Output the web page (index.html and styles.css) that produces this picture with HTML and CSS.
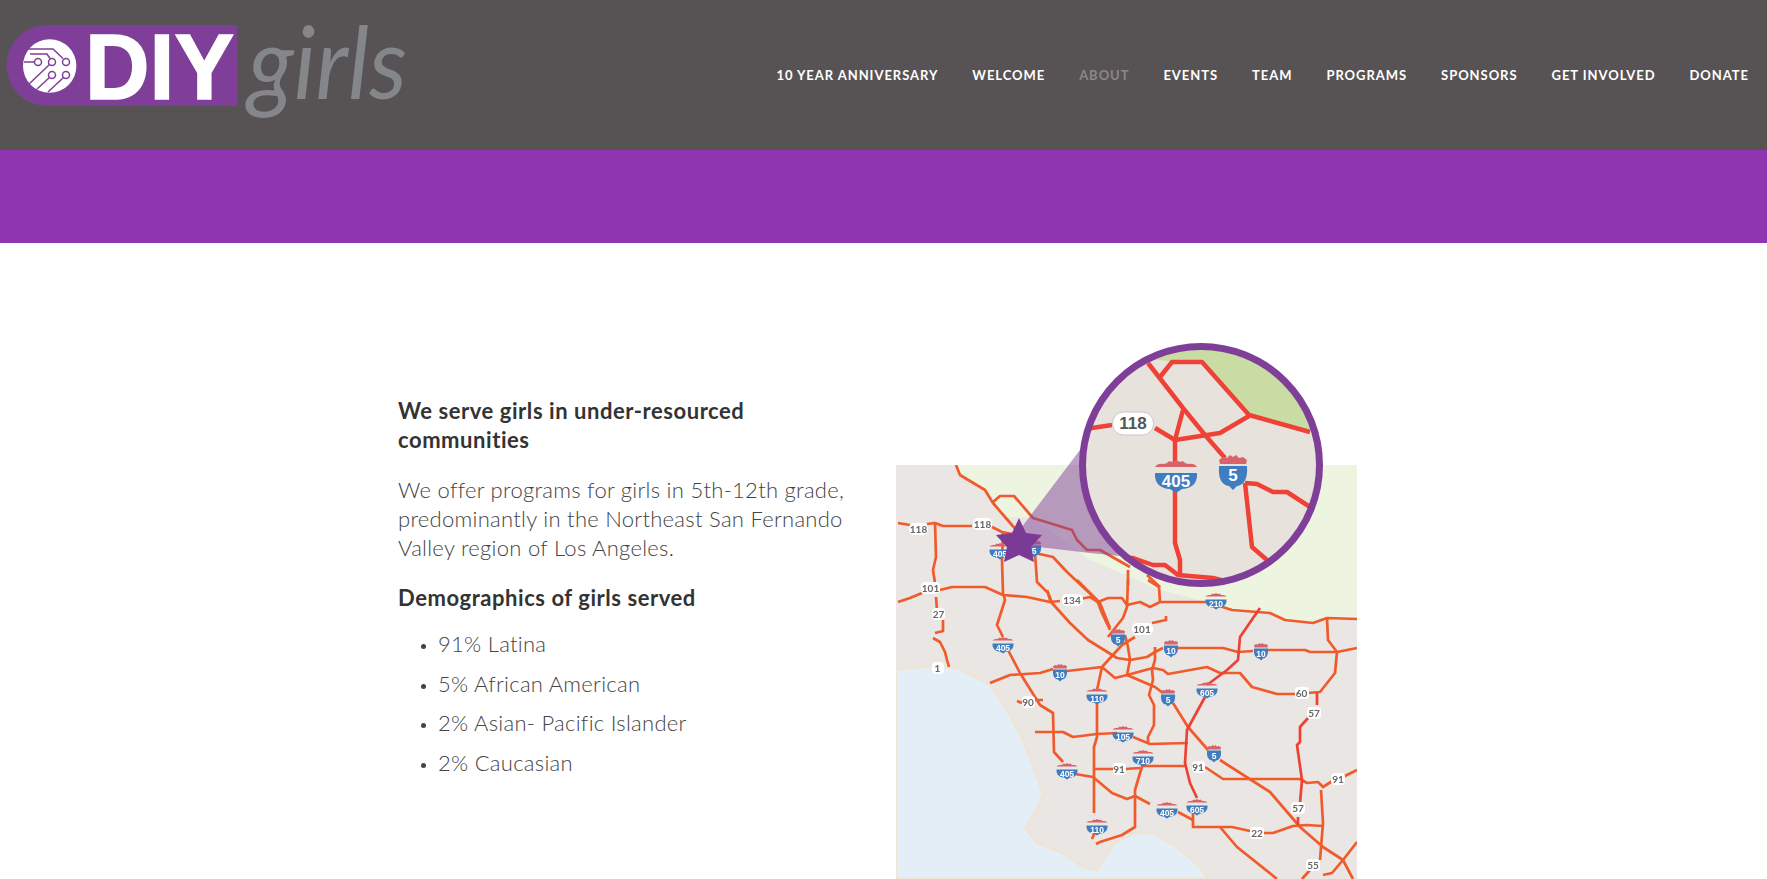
FILE: index.html
```html
<!DOCTYPE html>
<html lang="en">
<head>
    <meta charset="UTF-8">
    <meta name="viewport" content="width=device-width, initial-scale=1.0">
    <title>DIY Girls - About</title>
    <link rel="stylesheet" href="styles.css">
</head>
<body>
    <header class="site-header">
        <a class="logo" href="#" aria-label="DIY Girls">
            <svg class="logo-svg" viewBox="0 0 420 150" width="420" height="150">
                <path class="logo-pill" d="M237 25H47a40.500 40.500 0 0 0 0 81H237Z"/>
                <circle class="logo-chip" cx="49.700" cy="66" r="26.700"/>
                <g class="logo-trace">
                    <path d="M28 49H53L63 58.500"/>
                    <path d="M30 54H47L50 58.500"/>
                    <path d="M24 62H34.500"/>
                    <path d="M49.500 64.500L28 85"/>
                    <path d="M49.500 77.500L37 89"/>
                    <path d="M63.500 77.500L48 92"/>
                    <circle cx="38" cy="62" r="3.500"/>
                    <circle cx="52" cy="62" r="3.500"/>
                    <circle cx="66" cy="62" r="3.500"/>
                    <circle cx="52" cy="75" r="3.500"/>
                    <circle cx="66" cy="75" r="3.500"/>
                </g>
                <text class="logo-diy" x="85" y="99" textLength="149" lengthAdjust="spacingAndGlyphs">DIY</text>
                <text class="logo-girls" x="248" y="99" textLength="159" lengthAdjust="spacingAndGlyphs">girls</text>
            </svg>
        </a>
        <nav class="main-nav">
            <a href="#">10 Year Anniversary</a>
            <a href="#">Welcome</a>
            <a href="#" class="active">About</a>
            <a href="#">Events</a>
            <a href="#">Team</a>
            <a href="#">Programs</a>
            <a href="#">Sponsors</a>
            <a href="#">Get Involved</a>
            <a href="#">Donate</a>
        </nav>
    </header>

    <div class="band"></div>

    <main class="about">
        <section class="about-text">
            <h2>We serve girls in under-resourced communities</h2>
            <p>We offer programs for girls in 5th-12th grade, predominantly in the Northeast San Fernando Valley region of Los Angeles.</p>
            <h2>Demographics of girls served</h2>
            <ul>
                <li>91% Latina</li>
                <li>5% African American</li>
                <li>2% Asian- Pacific Islander</li>
                <li>2% Caucasian</li>
            </ul>
        </section>

        <!-- viewBox uses page coordinates, easier to trace the map that way -->
        <svg class="map" viewBox="890 340 480 539" width="480" height="539">
            <defs>
                <clipPath id="mapClip"><rect x="896" y="465" width="461" height="414"/></clipPath>
                <clipPath id="lensClip"><circle cx="1201" cy="465" r="116"/></clipPath>
                <filter id="soft"><feGaussianBlur stdDeviation="0.35"/></filter>
                <g id="wide">
                    <path class="crown" d="M-21-7Q-18-11-13-10-9-10-7-13-4-11 0-14 4-11 7-13 9-10 13-10 18-11 21-7 20-3H-20Z"/>
                    <path class="shield" d="M-21 -1H21C22 10 14 15 6 15L0 19-6 15C-14 15-22 10-21-1Z"/>
                </g>
                <g id="narrow">
                    <path class="crown" d="M-14-11L-10-14-6-13-3-16 0-14 3-16 6-13 10-14 14-11 13-7H-13Z"/>
                    <path class="shield" d="M-14-5H14C15 8 11 14 4 15L0 19-4 15C-11 14-15 8-14-5Z"/>
                </g>
            </defs>

            <g clip-path="url(#mapClip)" filter="url(#soft)">
                <rect class="land" x="896" y="465" width="461" height="414"/>
                <path class="hills" d="M956 465H1357V619L1327 618 1313 623 1285 620 1270 613 1232 610 1207 602 1160 590 1090 560 1033 518 1005 517 993 503 985 490 960 475Z"/>
                <path class="sea" d="M896 670L930 666 957 668 990 685 1007 710 1023 740 1043 793 1037 810 1025 828 1037 843 1063 853 1083 867 1097 870 1105 857 1115 843 1135 833 1153 833 1177 847 1200 867 1208 879H896Z"/>

                <g class="roads">
                    <path d="M956 465L960 475 985 490 993 503 1005 517 1018 532"/>
                    <path d="M993 502L1000 496H1014L1033 518 1072 530 1077 540 1087 550H1100L1130 567"/>
                    <path d="M1128 570V585M1147 575L1160 587"/>
                    <path d="M898 523L910 525M927 524L935 523 943 526H972M992 527L1002 532 1018 535"/>
                    <path d="M935 523L936 557 933 570 935 583M936 597L937 610M943 620V631L935 633M933 638L940 642 945 652 947 660 949 667"/>
                    <path d="M898 602L910 598 922 593M940 590L952 587H985L1003 595 1027 597 1050 602 1060 601"/>
                    <path d="M1080 599L1090 597 1098 602 1108 598H1122L1127 605 1140 602 1150 607 1160 602H1207L1232 610 1270 613 1285 620 1313 623 1327 618 1357 619"/>
                    <path d="M1003 533L1002 560 1003 593 1005 600 997 625 1003 637M1008 650L1020 673 1040 705 1053 713 1054 752 1063 762"/>
                    <path d="M1017 701L1022 703M1035 700H1043"/>
                    <path d="M1035 732H1063L1073 737 1097 734 1117 733M1133 737L1150 744 1188 743"/>
                    <path d="M1097 700V737L1094 747V813M1095 832L1092 839M1097 690L1102 667"/>
                    <path d="M1077 580L1097 600 1102 613 1110 630M1128 580L1127 607 1123 618 1108 637"/>
                    <path d="M1160 602L1159 587 1148 580"/>
                    <path d="M1047 590L1052 603 1070 623 1088 640 1117 658 1130 660"/>
                    <path d="M1035 553L1053 557 1067 572 1100 603 1110 628M1035 553L1037 582 1048 593 1051 603"/>
                    <path d="M990 683L1010 675 1040 673 1053 669M1067 671L1102 667 1115 678 1127 675M1102 667L1122 645 1135 637"/>
                    <path d="M1127 675L1130 660 1128 647 1125 635M1152 623L1166 620V616"/>
                    <path d="M1130 660L1147 657 1155 652 1163 648M1177 648H1223L1238 652 1253 651M1267 650H1305L1310 652H1337L1357 648"/>
                    <path d="M1127 675L1153 668 1163 670 1168 674 1207 667 1220 673H1240L1252 687 1277 694H1295M1307 693L1320 692 1335 673 1337 652 1328 640 1327 618"/>
                    <path d="M1127 675L1155 687 1163 693M1173 703L1188 727 1208 750M1220 760L1270 792 1300 827 1323 847 1343 860 1353 879"/>
                    <path d="M1155 647V660L1152 670 1153 680 1149 695 1154 705V725L1148 737V743M1143 763L1135 790V827L1122 835 1100 842 1096 844"/>
                    <path d="M1093 769H1113M1125 769L1140 768M1143 766H1187M1205 767L1223 779H1300L1307 783 1318 782 1323 787 1334 780M1343 777L1357 770"/>
                    <path d="M1075 774L1093 777 1112 793 1127 799 1135 796 1150 804M1178 812L1193 820"/>
                    <path d="M1193 812V827H1232L1250 831M1263 833H1273L1293 826 1307 825 1322 826M1220 827L1237 847 1277 879"/>
                    <path d="M1321 790L1323 823 1320 860M1310 870L1302 879M1357 842L1343 860 1332 873 1323 875"/>
                    <path class="red" d="M1260 608L1240 637 1238 660 1227 670 1207 685M1205 697L1187 730 1185 763 1190 783 1197 798"/>
                    <path class="red" d="M1317 693V705M1308 718L1300 727V742L1297 745 1302 780 1300 803M1298 817V825"/>
                </g>

                <g class="pills">
                    <rect x="909" y="523" width="19" height="12" rx="5"/><text x="918.500" y="533">118</text>
                    <rect x="973" y="518" width="19" height="12" rx="5"/><text x="982.500" y="528">118</text>
                    <rect x="921" y="582" width="19" height="12" rx="4"/><text x="930.500" y="592">101</text>
                    <rect x="932" y="608" width="13" height="12" rx="4"/><text x="938.500" y="618">27</text>
                    <rect x="932" y="662" width="12" height="12" rx="4"/><text x="937.500" y="672">1</text>
                    <rect x="1062" y="594" width="21" height="12" rx="5"/><text x="1072" y="604">134</text>
                    <rect x="1132" y="623" width="21" height="12" rx="5"/><text x="1142" y="633">101</text>
                    <rect x="1022" y="696" width="13" height="12" rx="4"/><text x="1028" y="706">90</text>
                    <rect x="1113" y="763" width="13" height="12" rx="4"/><text x="1119" y="773">91</text>
                    <rect x="1192" y="761" width="13" height="12" rx="4"/><text x="1198" y="771">91</text>
                    <rect x="1295" y="687" width="14" height="12" rx="4"/><text x="1301.500" y="697">60</text>
                    <rect x="1307" y="707" width="14" height="12" rx="4"/><text x="1314" y="717">57</text>
                    <rect x="1291" y="802" width="14" height="12" rx="4"/><text x="1298" y="812">57</text>
                    <rect x="1331" y="773" width="14" height="12" rx="4"/><text x="1338" y="783">91</text>
                    <rect x="1250" y="827" width="14" height="12" rx="4"/><text x="1257" y="837">22</text>
                    <rect x="1306" y="859" width="14" height="12" rx="4"/><text x="1313" y="869">55</text>
                </g>

                <g class="marks">
                    <g transform="translate(1003 644) scale(.5)"><use href="#wide"/><text y="13">405</text></g>
                    <g transform="translate(1000 550) scale(.5)"><use href="#wide"/><text y="13">405</text></g>
                    <g transform="translate(1034 548) scale(.5)"><use href="#narrow"/><text y="11">5</text></g>
                    <g transform="translate(1060 672) scale(.5)"><use href="#narrow"/><text y="11">10</text></g>
                    <g transform="translate(1118 637) scale(.5)"><use href="#narrow"/><text y="11">5</text></g>
                    <g transform="translate(1097 695) scale(.5)"><use href="#wide"/><text y="13">110</text></g>
                    <g transform="translate(1123 733) scale(.5)"><use href="#wide"/><text y="13">105</text></g>
                    <g transform="translate(1067 770) scale(.5)"><use href="#wide"/><text y="13">405</text></g>
                    <g transform="translate(1143 757) scale(.5)"><use href="#wide"/><text y="13">710</text></g>
                    <g transform="translate(1097 826) scale(.5)"><use href="#wide"/><text y="13">110</text></g>
                    <g transform="translate(1171 648) scale(.5)"><use href="#narrow"/><text y="11">10</text></g>
                    <g transform="translate(1261 651) scale(.5)"><use href="#narrow"/><text y="11">10</text></g>
                    <g transform="translate(1216 600) scale(.5)"><use href="#wide"/><text y="13">210</text></g>
                    <g transform="translate(1168 697) scale(.5)"><use href="#narrow"/><text y="11">5</text></g>
                    <g transform="translate(1207 689) scale(.5)"><use href="#wide"/><text y="13">605</text></g>
                    <g transform="translate(1214 753) scale(.5)"><use href="#narrow"/><text y="11">5</text></g>
                    <g transform="translate(1167 809) scale(.5)"><use href="#wide"/><text y="13">405</text></g>
                    <g transform="translate(1197 806) scale(.5)"><use href="#wide"/><text y="13">605</text></g>
                </g>
            </g>

            <polygon class="cone" points="1015,536 1086,442 1120,556 1090,553 1030,546"/>
            <polygon class="star" points="1019,518 1026,533 1042,535 1031,547 1034,562 1019,555 1004,562 1007,547 996,535 1012,533"/>

            <circle class="lens-bg" cx="1201" cy="465" r="118"/>
            <g clip-path="url(#lensClip)">
                <path class="lens-green" d="M1148 358L1172 362H1202L1249 415 1310 432 1330 400 1300 340H1140Z"/>
                <g class="lens-roads">
                    <path d="M1148 363L1183 408 1205 435 1225 458"/>
                    <path d="M1160 377L1172 362H1202L1249 415 1310 432"/>
                    <path d="M1249 416L1220 433 1175 440 1155 428"/>
                    <path d="M1085 429L1112 425"/>
                    <path d="M1183 410L1175 440V463"/>
                    <path d="M1175 490V543L1180 560V575"/>
                    <path d="M1245 483L1257 484 1273 492H1287L1310 507"/>
                    <path d="M1245 483L1252 547 1267 560"/>
                    <path d="M1125 558L1133 558 1153 565H1165L1178 575 1213 578 1240 585"/>
                </g>
                <g class="lens-pill">
                    <rect x="1112.500" y="412" width="41" height="23" rx="11"/>
                    <text x="1133" y="429">118</text>
                </g>
                <g class="marks">
                    <g transform="translate(1176 474)"><use href="#wide"/><text y="13">405</text></g>
                    <g transform="translate(1233 471)"><use href="#narrow"/><text y="10">5</text></g>
                </g>
            </g>
            <circle class="lens-ring" cx="1201" cy="465" r="118.500"/>
        </svg>
    </main>
</body>
</html>
```

FILE: styles.css
```css
body {
    margin: 0;
    background-color: #fff;
    font-family: Lato, "Open Sans", sans-serif;
    color: #444;
}

.site-header {
    display: flex;
    align-items: center;
    justify-content: space-between;
    height: 150px;
    padding-right: 18px;
    background-color: #575354;
}
.logo {
    display: block;
    height: 150px;
}
.logo-svg {
    display: block;
}
.logo-pill {
    fill: #7f3f98;
}
.logo-chip {
    fill: #fff;
}
.logo-trace {
    fill: none;
    stroke: #7f3f98;
    stroke-width: 1.5;
}
.logo-diy {
    fill: #fff;
    stroke: #fff;
    stroke-width: 1.5;
    font-family: "Liberation Sans", sans-serif;
    font-weight: 700;
    font-size: 93px;
}
.logo-girls {
    fill: #85868a;
    font-family: Lato, sans-serif;
    font-style: italic;
    font-size: 101px;
}

.main-nav {
    display: flex;
    gap: 34px;
}
.main-nav a {
    color: #fff;
    font-size: 13px;
    font-weight: 700;
    letter-spacing: 0.95px;
    text-decoration: none;
    text-transform: uppercase;
}
.main-nav a.active {
    color: #8a8788;
}

.band {
    height: 93px;
    background-color: #9035b0;
}

.about {
    display: flex;
    padding: 97px 0 0 398px;
}
.about-text {
    box-sizing: border-box;
    width: 492px;
    padding: 56px 32px 0 0;
    font-size: 22px;
    font-weight: 300;
    letter-spacing: 0.28px;
    line-height: 29px;
}
.about-text h2 {
    margin: 0 0 17px;
    color: #333;
    font-size: 22px;
    font-weight: 700;
    letter-spacing: 0.55px;
    line-height: 29px;
}
.about-text p {
    margin: 0 0 21px;
    padding-top: 4px;
}
.about-text ul {
    margin: 0;
    padding-left: 40px;
}
.about-text li {
    margin-bottom: 10.500px;
}
.about-text li::marker {
    font-size: 15px;
}

.map {
    display: block;
    flex: none;
}
.land {
    fill: #e9e6e3;
}
.hills {
    fill: #edf4e0;
}
.sea {
    fill: #e3eef7;
    stroke: #f0e4d4;
    stroke-width: 2.500;
}
.roads {
    fill: none;
    stroke: #f15a2b;
    stroke-width: 2.700;
    stroke-linejoin: round;
}
.roads .red {
    stroke: #ee4136;
}
.pills rect {
    fill: #fff;
}
.pills text {
    fill: #666;
    font-family: Lato, sans-serif;
    font-size: 10px;
    font-weight: 700;
    text-anchor: middle;
}
.crown {
    fill: #d9636a;
}
.shield {
    fill: #3f7cc0;
}
.marks text {
    fill: #fff;
    font-family: "Liberation Sans", sans-serif;
    font-size: 17px;
    font-weight: 700;
    text-anchor: middle;
}

.cone {
    fill: #7f3f98;
    fill-opacity: 0.5;
}
.star {
    fill: #7a3a96;
}
.lens-bg {
    fill: #e7e2dc;
}
.lens-green {
    fill: #c9dca4;
}
.lens-roads {
    fill: none;
    stroke: #ef4136;
    stroke-width: 4.500;
    stroke-linejoin: round;
}
.lens-pill rect {
    fill: #fff;
    stroke: #c9c6c3;
    stroke-width: 1;
}
.lens-pill text {
    fill: #555;
    font-family: "Liberation Sans", sans-serif;
    font-size: 17px;
    font-weight: 700;
    text-anchor: middle;
}
.lens-ring {
    fill: none;
    stroke: #7f3f98;
    stroke-width: 7;
}
```
